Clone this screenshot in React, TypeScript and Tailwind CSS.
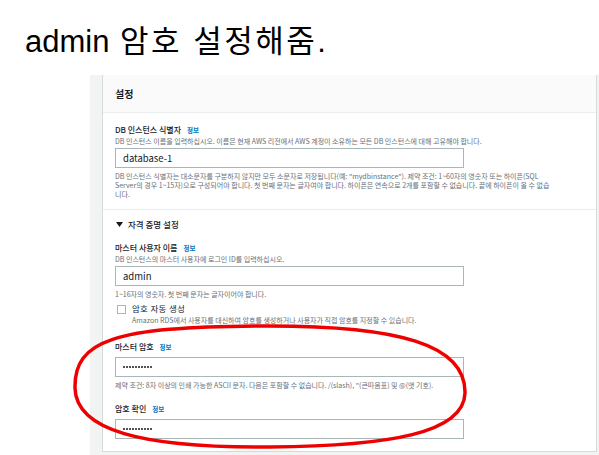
import React from 'react';

const kr = { fontFamily: '"Noto Sans CJK KR", "Noto Sans", sans-serif' };

function Info() {
  return <span className="ml-[6px] text-[6.5px] font-bold text-[#0073bb]">정보</span>;
}

function Label({ text }: { text: string }) {
  return (
    <div className="flex items-center text-[8px] leading-[12px] font-medium text-[#16191f]">
      <span>{text}</span>
      <Info />
    </div>
  );
}

function Desc({ children, className = '' }: { children: React.ReactNode; className?: string }) {
  return <div className={`text-[7px] leading-[10px] text-[#687078] whitespace-nowrap ${className}`}>{children}</div>;
}

function Help({ children, className = '' }: { children: React.ReactNode; className?: string }) {
  return <div className={`text-[7px] leading-[9px] text-[#687078] whitespace-nowrap ${className}`}>{children}</div>;
}

function Dots() {
  return (
    <div className="flex items-center gap-[1px]">
      {Array.from({ length: 10 }).map((_, i) => (
        <div key={i} className="w-[2px] h-[2px] rounded-full bg-[#16191f]" />
      ))}
    </div>
  );
}

function Field({ value, password = false, className = '' }: { value?: string; password?: boolean; className?: string }) {
  return (
    <div className={`w-[349px] h-[20px] border border-[#aab7b8] bg-white flex items-center pl-[7px] text-[#16191f] ${className}`}>
      {password ? <Dots /> : <span className="text-[9.5px]">{value}</span>}
    </div>
  );
}

export default function App() {
  return (
    <div className="relative w-[599px] h-[455px] bg-white overflow-hidden" style={kr}>
      {/* Title */}
      <div className="h-[75px] pl-[25px] pt-[23px]">
        <div className="text-[31px] leading-[38px] text-black whitespace-nowrap" style={{ fontFamily: '"Liberation Sans", "Noto Sans CJK KR", sans-serif' }}>
          admin <span className="ml-[2px] tracking-[2.5px]">암호 설정해줌.</span>
        </div>
      </div>

      {/* Console screenshot */}
      <div className="ml-[90px] h-[380px] bg-[#f2f3f3] pl-[12px] pr-[2px] overflow-hidden">
        <div className="bg-white border-x border-b border-[#d5dbdb]">
          <div className="h-[38px] bg-[#fafafa] border-b border-[#eaeded] flex items-center pl-[12px]">
            <span className="text-[10px] font-bold text-[#16191f]">설정</span>
          </div>

          {/* DB identifier */}
          <div className="px-[12px] pt-[11px] pb-[10px]">
            <Label text="DB 인스턴스 식별자" />
            <Desc>DB 인스턴스 이름을 입력하십시오. 이름은 현재 AWS 리전에서 AWS 계정이 소유하는 모든 DB 인스턴스에 대해 고유해야 합니다.</Desc>
            <Field value="database-1" className="mt-[2px]" />
            <Help className="mt-[4px]">
              DB 인스턴스 식별자는 대소문자를 구분하지 않지만 모두 소문자로 저장됩니다(예: "mydbinstance"). 제약 조건: 1~60자의 영숫자 또는 하이픈(SQL
              <br />
              Server의 경우 1~15자)으로 구성되어야 합니다. 첫 번째 문자는 글자여야 합니다. 하이픈은 연속으로 2개를 포함할 수 없습니다. 끝에 하이픈이 올 수 없습
              <br />
              니다.
            </Help>
          </div>

          {/* Credentials */}
          <div className="border-t border-[#eaeded] px-[12px] pt-[8px] pb-[12px]">
            <div className="flex items-center gap-[5px] text-[8.5px] leading-[12px] font-medium text-[#16191f]">
              <svg width="7" height="5" viewBox="0 0 7 5" className="ml-[1px]">
                <polygon points="0,0 7,0 3.5,5" fill="#16191f" />
              </svg>
              <span>자격 증명 설정</span>
            </div>

            <div className="mt-[12px]">
              <Label text="마스터 사용자 이름" />
              <Desc>DB 인스턴스의 마스터 사용자에 로그인 ID를 입력하십시오.</Desc>
              <Field value="admin" className="mt-[2px]" />
              <Help className="mt-[4px]">1~16자의 영숫자. 첫 번째 문자는 글자이어야 합니다.</Help>
            </div>

            <div className="mt-[3px] flex items-center h-[12px]">
              <div className="w-[9px] h-[9px] ml-[2px] mt-[2px] border border-[#aab7b8] bg-white" />
              <span className="ml-[6px] text-[8.5px] text-[#16191f] tracking-[0.3px]">암호 자동 생성</span>
            </div>
            <Desc className="mt-[1px] pl-[17px]">Amazon RDS에서 사용자를 대신하여 암호를 생성하거나 사용자가 직접 암호를 지정할 수 있습니다.</Desc>

            <div className="mt-[16px]">
              <Label text="마스터 암호" />
              <Field password className="mt-[4px]" />
              <Help className="mt-[4px]">제약 조건: 8자 이상의 인쇄 가능한 ASCII 문자. 다음은 포함할 수 없습니다. /(slash), "(큰따옴표) 및 @(앳 기호).</Help>
            </div>

            <div className="mt-[13px]">
              <Label text="암호 확인" />
              <Field password className="mt-[4px]" />
            </div>
          </div>
        </div>
      </div>

      {/* Hand-drawn highlight */}
      <svg className="absolute left-0 top-0 pointer-events-none" width="599" height="455" viewBox="0 0 599 455">
        <path
          d="M 75 388 C 74 340, 115 327, 260 326 C 400 325, 466 345, 465 393 C 464 433, 390 446, 270 447 C 140 448, 76 430, 75 388 Z"
          fill="none"
          stroke="#ee0000"
          strokeWidth="3.5"
        />
      </svg>
    </div>
  );
}
